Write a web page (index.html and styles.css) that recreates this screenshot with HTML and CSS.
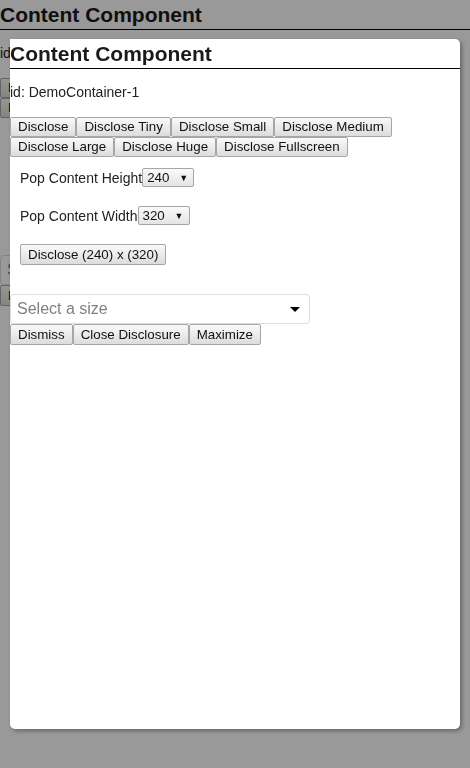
FILE: index.html
```html
<!DOCTYPE html>
<html>
<head>
<meta charset="utf-8">
<link rel="stylesheet" href="styles.css">
</head>
<body>
<div class="page">
  <h1 class="title">Content Component</h1>
  <p class="ident">id: DemoContainer-1</p>
  <div class="btnrow">
    <button class="btn">Disclose</button><button class="btn">Disclose Tiny</button><button class="btn">Disclose Small</button><button class="btn">Disclose Medium</button><button class="btn">Disclose Large</button><button class="btn">Disclose Huge</button><button class="btn">Disclose Fullscreen</button>
  </div>
  <div class="opts">
    <div class="optrow"><span class="lbl">Pop Content Height</span><span class="sel">240<span class="arr">▼</span></span></div>
    <div class="optrow"><span class="lbl">Pop Content Width</span><span class="sel">320<span class="arr">▼</span></span></div>
    <div class="optrow"><button class="btn">Disclose (240) x (320)</button></div>
  </div>
  <div class="sizesel"><span class="ph">Select a size</span><span class="caret"></span></div>
  <div class="btnrow last">
    <button class="btn">Dismiss</button><button class="btn">Close Disclosure</button><button class="btn">Maximize</button>
  </div>
</div>
<div class="overlay"></div>
<div class="panel">
  <h2 class="title">Content Component</h2>
  <p class="ident">id: DemoContainer-1</p>
  <div class="btnrow">
    <button class="btn">Disclose</button><button class="btn">Disclose Tiny</button><button class="btn">Disclose Small</button><button class="btn">Disclose Medium</button><button class="btn">Disclose Large</button><button class="btn">Disclose Huge</button><button class="btn">Disclose Fullscreen</button>
  </div>
  <div class="opts">
    <div class="optrow"><span class="lbl">Pop Content Height</span><span class="sel">240<span class="arr">▼</span></span></div>
    <div class="optrow"><span class="lbl">Pop Content Width</span><span class="sel">320<span class="arr">▼</span></span></div>
    <div class="optrow"><button class="btn">Disclose (240) x (320)</button></div>
  </div>
  <div class="sizesel"><span class="ph">Select a size</span><span class="caret"></span></div>
  <div class="btnrow last">
    <button class="btn">Dismiss</button><button class="btn">Close Disclosure</button><button class="btn">Maximize</button>
  </div>
</div>
</body>
</html>
```
FILE: styles.css
```css
html, body {
  margin: 0;
  padding: 0;
  background: #fff;
  font-family: "Liberation Sans", Arial, sans-serif;
  color: #000;
  height: 100%;
}
.title {
  margin: 0;
  font-size: 21px;
  line-height: 29px;
  font-weight: bold;
  color: #1a1a1a;
  border-bottom: 1px solid #000;
}
.ident {
  margin: 15px 0 17px 0;
  font-size: 14px;
  line-height: 16px;
  color: #222;
}
.btnrow {
  display: flex;
  flex-wrap: wrap;
}
.btn {
  font-family: "Liberation Sans", Arial, sans-serif;
  font-size: 13.33px;
  height: 20px;
  line-height: 16px;
  padding: 0 7px;
  margin: 0;
  border: 1px solid #a6a6a6;
  border-radius: 2px;
  background: linear-gradient(#fafafa, #dcdcdc);
  color: #111;
}
.btnrow.last .btn { height: 21px; }
.opts {
  padding: 11px 10px 0 10px;
}
.optrow {
  display: flex;
  align-items: center;
  height: 19px;
  margin-bottom: 19px;
}
.optrow:last-child {
  height: 21px;
  margin-bottom: 29px;
}
.optrow .btn { height: 21px; }
.lbl {
  font-size: 14px;
  color: #222;
}
.sel {
  display: inline-flex;
  align-items: center;
  justify-content: space-between;
  box-sizing: border-box;
  height: 19px;
  width: 52px;
  padding: 0 5px 0 4px;
  border: 1px solid #a6a6a6;
  border-radius: 2px;
  background: linear-gradient(#fafafa, #e4e4e4);
  font-size: 13.33px;
  color: #111;
}
.arr {
  font-size: 9px;
}
.sizesel {
  box-sizing: border-box;
  width: 300px;
  height: 30px;
  border: 1px solid #ddd;
  border-radius: 4px;
  display: flex;
  align-items: center;
  justify-content: space-between;
  padding: 0 9px 0 6px;
  background: #fff;
}
.ph {
  font-size: 16px;
  color: #808080;
}
.caret {
  width: 0;
  height: 0;
  border-left: 5px solid transparent;
  border-right: 5px solid transparent;
  border-top: 5px solid #000;
}
.overlay {
  position: fixed;
  inset: 0;
  background: rgba(0, 0, 0, 0.4);
}
.panel {
  position: fixed;
  left: 10px;
  top: 39px;
  width: 450px;
  height: 690px;
  background: #fff;
  border-radius: 0 5px 5px 5px;
  box-shadow: 2px 2px 4px rgba(0, 0, 0, 0.35);
}
```
